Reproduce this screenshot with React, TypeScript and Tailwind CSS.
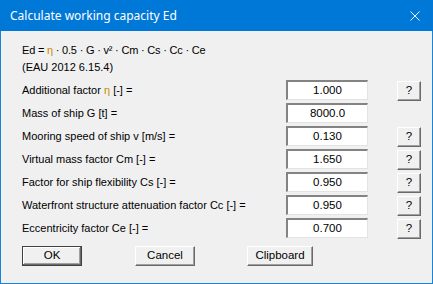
const font = { fontFamily: "'Liberation Sans', Arial, sans-serif" };

const rows = [
  { label: "Additional factor", eta: true, rest: " [-] =", value: "1.000", help: true },
  { label: "Mass of ship G [t] =", value: "8000.0", help: false },
  { label: "Mooring speed of ship v [m/s] =", value: "0.130", help: true },
  { label: "Virtual mass factor Cm [-] =", value: "1.650", help: true },
  { label: "Factor for ship flexibility Cs [-] =", value: "0.950", help: true },
  { label: "Waterfront structure attenuation factor Cc [-] =", value: "0.950", help: true },
  { label: "Eccentricity factor Ce [-] =", value: "0.700", help: true },
];

const Eta = () => <span className="text-[#c98a00]">η</span>;

const ClassicButton = ({ children, width, isDefault }: { children: React.ReactNode; width: string; isDefault?: boolean }) => (
  <div
    className={`${width} h-[20px] flex items-center justify-center bg-[#f0f0f0] text-black text-[11.5px] ${
      isDefault
        ? "border border-[#404040] shadow-[inset_-1px_-1px_0_#696969,inset_1px_1px_0_#fff,inset_-2px_-2px_0_#a0a0a0]"
        : "border-t border-l border-t-white border-l-white border-r border-b border-r-[#696969] border-b-[#696969] shadow-[inset_-1px_-1px_0_#a0a0a0]"
    }`}
  >
    {children}
  </div>
);

export default function App() {
  return (
    <div className="w-[433px] h-[284px] bg-[#f0f0f0] border-x border-b border-[#1883d7] flex flex-col" style={font}>
      <div className="h-[31px] -mx-px bg-[#0078d7] flex items-center justify-between pl-[10px] pr-[13px] text-white">
        <span className="text-[12px]" style={{ fontFamily: "'Noto Sans', sans-serif" }}>
          Calculate working capacity Ed
        </span>
        <svg width="10" height="10" viewBox="0 0 10 10">
          <path d="M0.5 0.5 L9.5 9.5 M9.5 0.5 L0.5 9.5" stroke="white" strokeWidth="1" />
        </svg>
      </div>
      <div className="flex flex-col pl-[21px] pt-[11px] text-[11px] text-black">
        <div className="h-[17px] leading-[17px] tracking-[-0.2px]">
          Ed = <Eta /> · 0.5 · G · v² · Cm · Cs · Cc · Ce
        </div>
        <div className="h-[17px] leading-[17px]">(EAU 2012 6.15.4)</div>
        <div className="mt-[4px] flex flex-col gap-[3px]">
          {rows.map((r) => (
            <div key={r.value + r.label} className="flex items-center h-[20px]">
              <div className="w-[264px]">
                {r.label}
                {r.eta && (
                  <>
                    {" "}
                    <Eta />
                    {r.rest}
                  </>
                )}
              </div>
              <div className="w-[82px] h-[20px] bg-white border-t-2 border-l-2 border-t-[#838383] border-l-[#838383] border-r border-b border-r-[#e3e3e3] border-b-[#e3e3e3] flex items-center justify-center text-[11.5px]">
                {r.value}
              </div>
              {r.help && (
                <div className="ml-[29px] mt-[2px]">
                  <ClassicButton width="w-[24px]">?</ClassicButton>
                </div>
              )}
            </div>
          ))}
        </div>
        <div className="mt-[8px] flex">
          <ClassicButton width="w-[60px]" isDefault>
            OK
          </ClassicButton>
          <div className="ml-[53px]">
            <ClassicButton width="w-[60px]">Cancel</ClassicButton>
          </div>
          <div className="ml-[52px]">
            <ClassicButton width="w-[66px]">Clipboard</ClassicButton>
          </div>
        </div>
      </div>
    </div>
  );
}
